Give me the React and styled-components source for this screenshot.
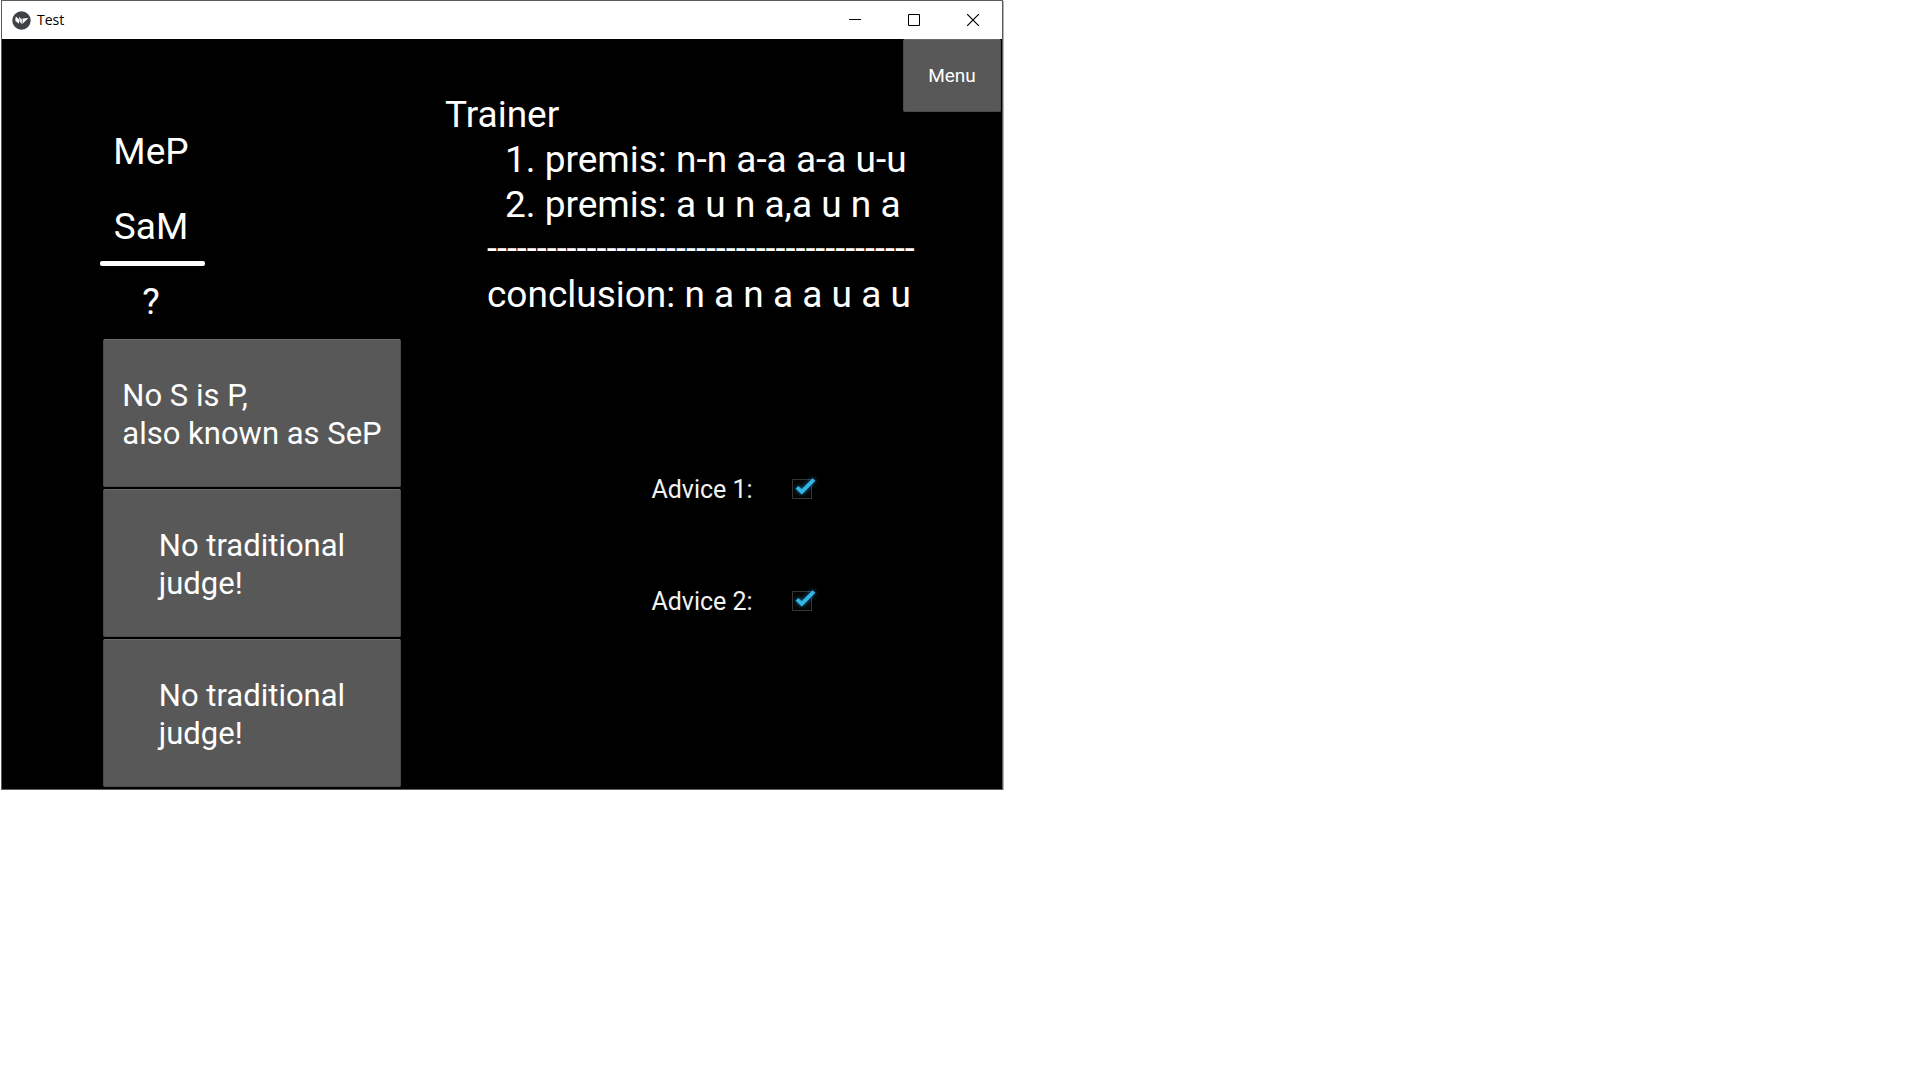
import React from "react";
import styled, { createGlobalStyle } from "styled-components";

const GlobalStyle = createGlobalStyle`
  *, *::before, *::after { box-sizing: border-box; }
  body {
    margin: 0;
    background: #fff;
    font-family: Roboto, "Liberation Sans", sans-serif;
  }
`;

const Window = styled.main`
  width: 1002px;
  max-width: 100%;
  margin-left: 1px;
  background: #000;
  color: #fff;
  border: 1px solid #5c5c5c;
  box-shadow: 1px 1px 0 #b4b4b4;
`;

const TitleBar = styled.header`
  display: flex;
  align-items: center;
  height: 38px;
  padding-left: 10px;
  background: #fff;
  color: #000;
`;

const Title = styled.h1`
  flex: 1;
  margin: 0;
  padding: 0 0 1px 6px;
  font: 400 14px/20px "Open Sans", "Noto Sans", sans-serif;
`;

const CaptionButton = styled.button`
  display: grid;
  place-items: center;
  width: 59px;
  height: 38px;
  padding: 0;
  border: 0;
  background: none;
  color: #000;
`;

const Content = styled.div`
  display: grid;
  grid-template-columns: 10% 30% 60%;
  min-height: 750px;
`;

const FlatButton = styled.button`
  padding: 0;
  border: 1px solid #4c4c4c;
  border-top-color: #6a6a6a;
  border-radius: 2px;
  background: #585858;
  color: #fff;
  font-family: inherit;
`;

const Syllogism = styled.section`
  grid-column: 2;
  display: flex;
  flex-direction: column;
  padding-top: 75px;
`;

const Figure = styled.div`
  width: 98px;
  font-size: 37px;
  line-height: 75px;
  text-align: center;
`;

const Rule = styled.hr`
  width: 105px;
  height: 5px;
  margin: -3px 0 -2px -2px;
  border: 0;
  border-radius: 2px;
  background: #fff;
`;

const AnswerButton = styled(FlatButton)`
  display: grid;
  place-content: center;
  height: 148px;
  margin: 0 1px 2px;
  padding-top: 4px;
  font-size: 31px;
  line-height: 38px;
  text-align: left;
  white-space: pre-line;
`;

const RightPane = styled.section`
  display: grid;
  grid-template-rows: 394px auto;
  grid-template-columns: 100%;
`;

const Trainer = styled.div`
  grid-area: 1 / 1;
  padding: 53px 0 0 43px;
  font-size: 37px;
  line-height: 45px;
  white-space: nowrap;
`;

const Line = styled.div`
  padding-left: ${(p) => p.$indent}px;
`;

const DashLine = styled(Line)`
  font-size: 36px;
`;

const MenuButton = styled(FlatButton)`
  grid-area: 1 / 1;
  justify-self: end;
  width: 98px;
  height: 73px;
  margin: 0 1px;
  font-size: 19px;
`;

const AdviceList = styled.div`
  padding-left: 250px;
`;

const AdviceRow = styled.div`
  display: grid;
  grid-template-columns: 100px 100px;
  align-items: center;
  justify-items: center;
  height: 112px;
  font-size: 25px;
`;

const AdviceLabel = styled.label`
  color: #f2f2f2;
  white-space: nowrap;
`;

const Tick = styled.span`
  display: grid;
  place-items: center;
  width: 32px;
  height: 32px;
`;

const TickInput = styled.input`
  grid-area: 1 / 1;
  appearance: none;
  width: 20px;
  height: 20px;
  margin: 0;
  border: 1px solid #353535;
  background: #050505;
  & + svg { visibility: hidden; }
  &:checked + svg { visibility: visible; }
`;

const TickMark = styled.svg`
  grid-area: 1 / 1;
  pointer-events: none;
  filter: drop-shadow(0 0 2px #1682ad);
`;

function Advice({ id, children }) {
  return (
    <AdviceRow>
      <AdviceLabel htmlFor={id}>{children}</AdviceLabel>
      <Tick>
        <TickInput id={id} type="checkbox" defaultChecked />
        <TickMark width="32" height="32" viewBox="0 0 32 32">
          <path d="M11 14.3 L15.8 18.8 L28 6.5" fill="none" stroke="#33b5e5" strokeWidth="3.8" />
        </TickMark>
      </Tick>
    </AdviceRow>
  );
}

function AppLogo() {
  return (
    <svg width="19" height="19" viewBox="0 0 19 19" aria-hidden="true">
      <circle cx="9.5" cy="9.5" r="9.2" fill="#3f4245" />
      <path d="M3.8 5.6 L7.2 8.6 L7 12.8 L3.2 9.8 Z" fill="#fff" />
      <path d="M7 5.8 L10.2 8.4 L9.6 13.2 L7.6 10.6 Z" fill="#e4e4e4" />
      <path d="M10.6 7.6 L16.4 7 L10.4 13 Z" fill="#fff" />
    </svg>
  );
}

const premises = ["1. premis: n-n a-a a-a u-u", "2. premis: a u n a,a u n a"];

const answers = ["No S is P,\nalso known as SeP", "No traditional\njudge!", "No traditional\njudge!"];

export default function App() {
  return (
    <>
      <GlobalStyle />
      <Window>
        <TitleBar>
          <AppLogo />
          <Title>Test</Title>
          <CaptionButton aria-label="Minimize">
            <svg width="12" height="12"><path d="M0 5.5H12" stroke="currentColor" /></svg>
          </CaptionButton>
          <CaptionButton aria-label="Maximize">
            <svg width="12" height="12"><path d="M.5 .5H11.5V11.5H.5Z" fill="none" stroke="currentColor" /></svg>
          </CaptionButton>
          <CaptionButton aria-label="Close">
            <svg width="12" height="12"><path d="M0 0L12 12M12 0L0 12" stroke="currentColor" strokeWidth="1.2" /></svg>
          </CaptionButton>
        </TitleBar>
        <Content>
          <Syllogism>
            <Figure>MeP</Figure>
            <Figure>SaM</Figure>
            <Rule />
            <Figure>?</Figure>
            {answers.map((text, i) => (
              <AnswerButton key={i}><span>{text}</span></AnswerButton>
            ))}
          </Syllogism>
          <RightPane>
            <Trainer>
              <Line $indent={0}>Trainer</Line>
              {premises.map((text) => (
                <Line key={text} $indent={60}>{text}</Line>
              ))}
              <DashLine $indent={42}>{"-".repeat(43)}</DashLine>
              <Line $indent={42}>conclusion: n a n a a u a u</Line>
            </Trainer>
            <MenuButton>Menu</MenuButton>
            <AdviceList>
              <Advice id="advice-1">Advice 1:</Advice>
              <Advice id="advice-2">Advice 2:</Advice>
            </AdviceList>
          </RightPane>
        </Content>
      </Window>
    </>
  );
}
